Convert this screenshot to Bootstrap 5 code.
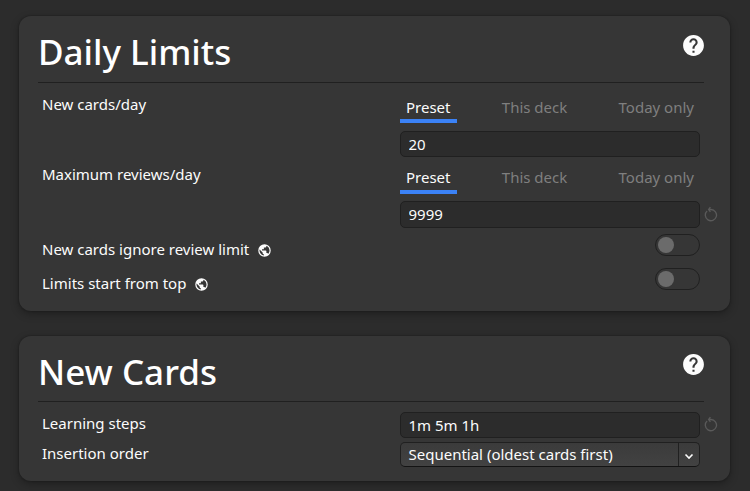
<!DOCTYPE html>
<html lang="en" data-bs-theme="dark">
<head>
<meta charset="utf-8">
<meta name="viewport" content="width=device-width, initial-scale=1">
<title>Deck options</title>
<link href="https://cdn.jsdelivr.net/npm/bootstrap@5.3.0/dist/css/bootstrap.min.css" rel="stylesheet">
<style>
body { background: #2c2c2c; color: #fcfcfc; font: 15px/20px "Noto Sans", sans-serif; height: 491px; padding: 16px 20px 0 19px; }
.panel { background: #363636; border: 0; border-radius: 12px; box-shadow: 0 0 1px 1px rgba(20,20,20,.2), 0 3px 8px rgba(0,0,0,.3); padding: 0 26px 0 19px; color: inherit; }
.panel-limits { height: 295px; margin-bottom: 25px; }
.panel-new { height: 145px; }
.panel-head { height: 67px; border-bottom: 1px solid #202020; padding-top: 12px; }
.panel-new .panel-head { height: 66px; }
.panel-head h1 { font-size: 35px; line-height: 47px; font-weight: 500; }
.panel-head svg { margin-top: 5px; margin-right: -2px; }
.panel-new .panel-head svg { margin-top: 4px; }
.setting { padding-left: 4px; padding-right: 4px; }
.control { width: 300px; position: relative; }
.limit-a { height: 74px; } .limit-b { height: 71px; }
.limit-a > span { padding-top: 11px; } .limit-b > span { padding-top: 7px; }
.limit-a .control { padding-top: 12px; } .limit-b .control { padding-top: 8px; }
.scope { height: 28px; margin-bottom: 8px; }
.limit-b .scope { height: 29px; margin-bottom: 7px; }
.scope button { background: none; border: 0; border-bottom: 4px solid transparent; color: #7f7f7f; padding: 2px 6px 0; line-height: 20px; text-align: center; display: flex; }
.scope button.active { border-color: #3b82f6; color: #fcfcfc; }
.field { display: block; width: 300px; height: 26px; background: #2c2c2c; border: 1px solid #202020; border-radius: 5px; color: #fcfcfc; padding: 0 7.5px 1px; font-size: 15px; line-height: 22px; outline: 0; }
.limit-b .field { height: 27px; }
.revert { position: absolute; left: 304px; bottom: 6px; }
.toggle-row { height: 34px; padding-top: 6px; }
.toggle-row > span { padding-top: 5px; }
.toggle-row svg { margin-left: 8px; margin-top: 4px; }
.switch { width: 45px; height: 22px; border: 1px solid #202020; border-radius: 11px; padding: 2px; }
.switch i { display: block; width: 16px; height: 16px; border-radius: 50%; background: #6b6b6b; }
.steps { height: 36px; padding-top: 10px; }
.steps > span { padding-top: 1px; }
.order { height: 30px; padding-top: 4px; }
.order > span { padding-top: 1px; }
.picker { width: 300px; height: 25px; border: 1px solid #202020; border-bottom-color: #141414; border-radius: 5px; background: linear-gradient(#3b3b3b, #424242); overflow: hidden; }
.picker > div:first-child { padding-left: 7.5px; line-height: 23px; }
.picker > div:last-child { width: 21px; border-left: 1px solid #202020; padding-top: 2px; }
</style>
</head>
<body>
<svg class="d-none">
  <symbol id="help" viewBox="0 0 24 24"><path fill="#fcfcfc" d="M12 2C6.48 2 2 6.48 2 12s4.48 10 10 10 10-4.480 10-10S17.520 2 12 2zm1 17h-2v-2h2v2zm2.070-7.750-.9.920C13.450 12.900 13 13.500 13 15h-2v-.5c0-1.100.45-2.100 1.170-2.830l1.240-1.260c.37-.36.59-.86.59-1.410 0-1.100-.9-2-2-2s-2 .9-2 2H8c0-2.210 1.790-4 4-4s4 1.790 4 4c0 .88-.36 1.680-.93 2.250z"/></symbol>
  <symbol id="globe" viewBox="0 0 24 24"><path fill="#fcfcfc" d="M17.900 17.390c-.26-.8-1.010-1.390-1.900-1.390h-1v-3a1 1 0 0 0-1-1H8v-2h2a1 1 0 0 0 1-1V7h2a2 2 0 0 0 2-2v-.41c2.930 1.180 5 4.050 5 7.410 0 2.080-.8 3.970-2.100 5.390M11 19.930C7.050 19.440 4 16.080 4 12c0-.62.080-1.220.21-1.790L9 15v1a2 2 0 0 0 2 2m1-16A10 10 0 0 0 2 12a10 10 0 0 0 10 10 10 10 0 0 0 10-10A10 10 0 0 0 12 2z"/></symbol>
  <symbol id="reset" viewBox="0 0 14 16"><path d="M3.100 5A5.600 5.600 0 1 0 7 3.500H4.800M6.400 1.200 4.600 3.500 6.400 5.800" fill="none" stroke="#5a5a5a" stroke-width="1.300"/></symbol>
</svg>

<section class="card panel panel-limits">
  <div class="panel-head d-flex justify-content-between align-items-start">
    <h1 class="mb-0">Daily Limits</h1>
    <svg width="25" height="25"><use href="#help"/></svg>
  </div>
  <div class="setting limit-a d-flex justify-content-between">
    <span>New cards/day</span>
    <div class="control">
      <div class="scope d-flex justify-content-between"><button class="active">Preset</button><button>This deck</button><button>Today only</button></div>
      <input class="field" value="20" aria-label="New cards per day">
    </div>
  </div>
  <div class="setting limit-b d-flex justify-content-between">
    <span>Maximum reviews/day</span>
    <div class="control">
      <div class="scope d-flex justify-content-between"><button class="active">Preset</button><button>This deck</button><button>Today only</button></div>
      <input class="field" value="9999" aria-label="Maximum reviews per day">
      <svg class="revert" width="14" height="16"><use href="#reset"/></svg>
    </div>
  </div>
  <div class="setting toggle-row d-flex justify-content-between">
    <span class="d-flex align-items-start">New cards ignore review limit<svg width="15" height="15"><use href="#globe"/></svg></span>
    <div class="switch"><i></i></div>
  </div>
  <div class="setting toggle-row d-flex justify-content-between">
    <span class="d-flex align-items-start">Limits start from top<svg width="15" height="15"><use href="#globe"/></svg></span>
    <div class="switch"><i></i></div>
  </div>
</section>

<section class="card panel panel-new">
  <div class="panel-head d-flex justify-content-between align-items-start">
    <h1 class="mb-0">New Cards</h1>
    <svg width="25" height="25"><use href="#help"/></svg>
  </div>
  <div class="setting steps d-flex justify-content-between">
    <span>Learning steps</span>
    <div class="control">
      <input class="field" value="1m 5m 1h" aria-label="Learning steps">
      <svg class="revert" width="14" height="16"><use href="#reset"/></svg>
    </div>
  </div>
  <div class="setting order d-flex justify-content-between">
    <span>Insertion order</span>
    <div class="picker d-flex">
      <div class="flex-grow-1">Sequential (oldest cards first)</div>
      <div class="d-flex align-items-center justify-content-center"><svg width="10" height="8" viewBox="0 0 10 8"><path d="M1.500 2.500 5 6l3.500-3.500" fill="none" stroke="#fcfcfc" stroke-width="1.600"/></svg></div>
    </div>
  </div>
</section>
<script src="https://cdn.jsdelivr.net/npm/bootstrap@5.3.0/dist/js/bootstrap.bundle.min.js"></script>
</body>
</html>
